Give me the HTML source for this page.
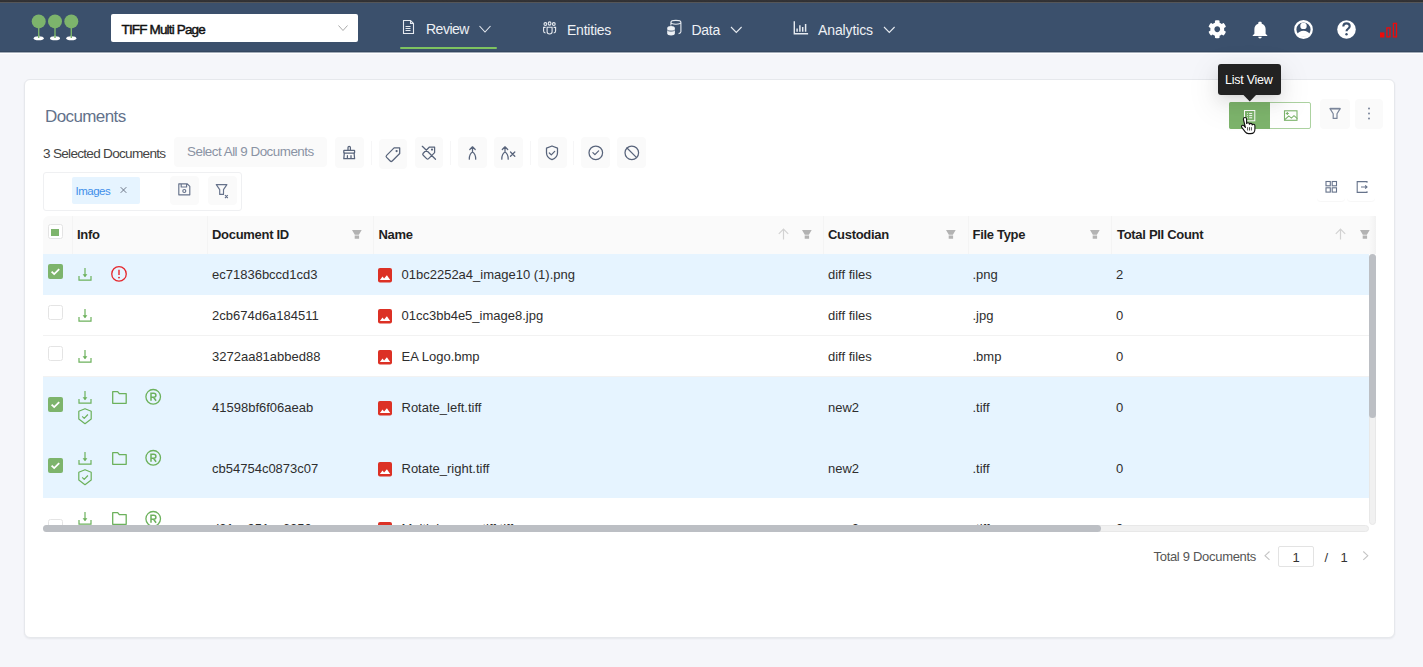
<!DOCTYPE html>
<html><head><meta charset="utf-8">
<style>
*{box-sizing:border-box;margin:0;padding:0}
html,body{width:1423px;height:667px;overflow:hidden;background:#f5f6fa;font-family:"Liberation Sans",sans-serif;color:#333}
.a{position:absolute}
svg{position:absolute;overflow:visible}
.t{white-space:nowrap;line-height:1}
#top{left:0;top:0;width:1423px;height:3px;background:linear-gradient(#343437 0,#303033 1.8px,#555658 1.8px,#555658 3px)}
#nav{left:0;top:3px;width:1423px;height:49px;background:#3b506c;border-bottom:1px solid #34475f}
#navline{left:0;top:52px;width:1423px;height:2px;background:linear-gradient(#a3acb9 0,#a3acb9 1px,#fff 1px)}
#card{left:24px;top:79px;width:1371px;height:559px;background:#fff;border:1px solid #e6e8ec;border-radius:6px;box-shadow:0 1px 2px rgba(30,40,60,.07)}
.nt{color:#eef1f5;font-size:14px}
.btn{background:#fafafa;border-radius:4px}
.hd{font-weight:700;font-size:13px;color:#1f1f1f;letter-spacing:-0.3px}
.cell{font-size:13px;color:#2e2e2e}
.row{left:43px;width:1326px}
.sel{background:#e6f4ff}
.bl{border-bottom:1px solid #f0f0f0}
.cb{width:15px;height:15px;border:1px solid #d9d9d9;border-radius:3px;background:#fff}
.cbon{width:15px;height:15px;border-radius:2px;background:#7db46c}
</style></head><body>
<div class="a" id="top"></div>
<div class="a" id="nav"></div>
<div class="a" id="navline"></div>


<svg width="0" height="0" style="position:absolute">
 <defs>
  <symbol id="dl" viewBox="0 0 14 13" overflow="visible"><g fill="none" stroke="#6cb15c" stroke-width="1.2"><path d="M7 0v8.5 M1 8v4.2h12V8"/></g><path d="M4.6 6.2h4.8L7 9.2z" fill="#6cb15c"/></symbol>
  <symbol id="sh" viewBox="0 0 14 16" overflow="visible"><path fill="none" stroke="#6cb15c" stroke-width="1.2" stroke-linejoin="round" d="M7 .7L13.2 3.2V11L7 15.7 .8 11V3.2z M4.2 8.4l2 2 3.7-3.9"/></symbol>
  <symbol id="fd" viewBox="0 0 15 13" overflow="visible"><path fill="none" stroke="#6cb15c" stroke-width="1.3" stroke-linejoin="round" d="M.7 .7h5l1.6 2h6.9v9.6H.7z"/></symbol>
  <symbol id="rc" viewBox="0 0 17 16" overflow="visible"><circle cx="8.2" cy="7.8" r="7.3" fill="none" stroke="#6cb15c" stroke-width="1.3"/><path fill="none" stroke="#6cb15c" stroke-width="1.5" d="M6 11.7V4.2h2.7c1.4 0 2.2.8 2.2 2s-.8 2-2.2 2H6 M8.5 8.2l2.6 3.5"/></symbol>
  <symbol id="wn" viewBox="0 0 16 16" overflow="visible"><circle cx="8" cy="7.9" r="7.25" fill="none" stroke="#e5262c" stroke-width="1.3"/><path d="M8 3.8v5.2" stroke="#e5262c" stroke-width="1.4"/><circle cx="8" cy="11.6" r=".95" fill="#e5262c"/></symbol>
  <symbol id="im" viewBox="0 0 14 14" overflow="visible"><rect x="0" y="0" width="14" height="14.4" rx="2" fill="#dc3125"/><path fill="#fff" d="M1.9 12L4.5 8.4 6.1 10.5 8.9 7.3 12.2 12z"/></symbol>
  <symbol id="ft" viewBox="0 0 10 9" overflow="visible"><path fill="#b3b3b3" d="M0 0h9.7L6.9 4.7H2.8z M2.7 5.4h4.4v3.4H2.7z"/></symbol>
  <symbol id="ar" viewBox="0 0 11 11" overflow="visible"><path fill="none" stroke="#d2d2d2" stroke-width="1.2" d="M5.5 1v10.5 M.8 5.8l4.7-4.8 4.7 4.8"/></symbol>
  <symbol id="ck" viewBox="0 0 15 15" overflow="visible"><rect width="15" height="15" rx="2" fill="#7db46c"/><path d="M3.6 7.6l2.6 2.5 5-5" fill="none" stroke="#fff" stroke-width="1.8"/></symbol>
  <symbol id="uc" viewBox="0 0 15 15" overflow="visible"><rect x=".5" y=".5" width="14" height="14" rx="2" fill="#fff" stroke="#e4e4e4"/></symbol>
 </defs>
</svg>

<!-- logo -->
<svg class="a" style="left:0;top:0" width="100" height="50">
  <g fill="#7db46c">
    <circle cx="38.7" cy="21.4" r="7"/><circle cx="55" cy="21.4" r="7"/><circle cx="71.3" cy="21.4" r="7"/>
    <rect x="38" y="27" width="1.4" height="11"/><rect x="54.3" y="27" width="1.4" height="11"/><rect x="70.6" y="27" width="1.4" height="11"/>
  </g>
  <g fill="#fff"><ellipse cx="38.7" cy="38.3" rx="5" ry="2"/><ellipse cx="55" cy="38.3" rx="5" ry="2"/><ellipse cx="71.3" cy="38.3" rx="5" ry="2"/></g>
  <g fill="#7db46c"><rect x="38" y="35" width="1.4" height="3"/><rect x="54.3" y="35" width="1.4" height="3"/><rect x="70.6" y="35" width="1.4" height="3"/></g>
</svg>

<!-- project select -->
<div class="a" style="left:111px;top:14px;width:247px;height:28px;background:#fff;border-radius:2px"></div>
<div class="a t" style="left:121.5px;top:23px;font-size:13.5px;font-weight:400;color:#111;-webkit-text-stroke:.45px #111;letter-spacing:-0.84px">TIFF Multi Page</div>
<svg class="a" style="left:0;top:0" width="1" height="1"><polyline points="338.5,25.5 343,30.5 347.5,25.5" fill="none" stroke="#aaa" stroke-width="1"/></svg>

<!-- nav items -->
<svg class="a" style="left:0;top:0" width="1" height="1">
  <g fill="none" stroke="#e6eaf0" stroke-width="1.1">
    <path d="M403.5 20.5h7l3 3v10h-10z M410.5 20.5v3h3"/>
    <path d="M405.5 26.5h5 M405.5 28.5h5 M405.5 30.5h5"/>
  </g>
</svg>
<div class="a t nt" style="left:426px;top:21.6px;font-size:14px;letter-spacing:-0.5px">Review</div>
<svg class="a" style="left:0;top:0" width="1" height="1"><polyline points="479.5,26 485,32 490.5,26" fill="none" stroke="#e6eaf0" stroke-width="1.1"/></svg>
<div class="a" style="left:400px;top:47px;width:97px;height:2px;background:#7ec35f;border-radius:1px"></div>

<svg class="a" style="left:0;top:0" width="1" height="1">
  <g fill="none" stroke="#e6eaf0" stroke-width="1.1">
    <circle cx="545.4" cy="24" r="1.4"/><ellipse cx="549.6" cy="23.5" rx="1.35" ry="1.65"/><circle cx="553.8" cy="24" r="1.4"/>
    <path d="M547.1 27.3h5v4.5c0 1.3-1.1 2.2-2.5 2.2s-2.5-.9-2.5-2.2z"/>
    <path d="M545.6 27.4h-2v3.6c0 1 .7 1.8 1.9 2 M553.6 27.4h2v3.6c0 1-.7 1.8-1.9 2"/>
  </g>
</svg>
<div class="a t nt" style="left:567px;top:22.6px;font-size:14px;letter-spacing:-0.22px">Entities</div>

<svg class="a" style="left:0;top:0" width="1" height="1">
  <g stroke="#e6eaf0" stroke-width="1.1">
    <path fill="none" d="M670.9 22.3c0-1.1 2.2-1.9 5-1.9s5 .8 5 1.9v9.5c0 .9-.8 1.6-2.3 1.8 M670.9 22.3c0 1.1 2.2 1.9 5 1.9s5-.8 5-1.9 M670.9 22.3v3.3"/>
    <path fill="#eef1f5" stroke="none" d="M667.2 27.9c0-1.2 1.7-2 3.85-2s3.85.8 3.85 2v5.6c0 1.2-1.7 2-3.85 2s-3.85-.8-3.85-2z"/>
    <path fill="none" stroke="#3b506c" stroke-width=".9" d="M667.2 29.9c.6.8 2 1.2 3.85 1.2s3.25-.4 3.85-1.2"/>
  </g>
</svg>
<div class="a t nt" style="left:691.5px;top:22.6px;font-size:14px;letter-spacing:-0.3px">Data</div>
<svg class="a" style="left:0;top:0" width="1" height="1"><polyline points="731,27 736.3,32.5 741.6,27" fill="none" stroke="#e6eaf0" stroke-width="1.1"/></svg>

<svg class="a" style="left:0;top:0" width="1" height="1">
  <g fill="none" stroke="#e6eaf0" stroke-width="1.2">
    <path stroke-width="1.4" d="M794.3 21.3v12.4h13.8"/>
    <path stroke-width="1.5" d="M797.1 28.4v3.3 M799.9 25.2v6.5 M802.7 26.9v4.8 M805.6 23.9v7.8"/>
  </g>
</svg>
<div class="a t nt" style="left:818px;top:22.6px;font-size:14px;letter-spacing:-0.12px">Analytics</div>
<svg class="a" style="left:0;top:0" width="1" height="1"><polyline points="884,27 889.3,32.5 894.6,27" fill="none" stroke="#e6eaf0" stroke-width="1.1"/></svg>

<!-- right nav icons -->
<svg class="a" style="left:1208px;top:20.3px" width="18.5" height="18.5" viewBox="0 0 512 512"><path fill="#fff" d="M487.4 315.7l-42.6-24.6c4.3-23.2 4.3-47 0-70.2l42.6-24.6c4.9-2.8 7.1-8.6 5.5-14-11.1-35.6-30-67.8-54.7-94.6-3.8-4.1-10-5.100-14.8-2.3L380.8 110c-17.9-15.4-38.5-27.3-60.8-35.1V25.8c0-5.6-3.9-10.5-9.4-11.7-36.7-8.2-74.3-7.8-109.2 0-5.5 1.2-9.4 6.1-9.4 11.7V75c-22.2 7.9-42.8 19.8-60.8 35.1L88.7 85.5c-4.9-2.8-11-1.9-14.8 2.3-24.7 26.7-43.6 58.9-54.7 94.6-1.7 5.4.6 11.2 5.5 14L67.3 221c-4.3 23.2-4.3 47 0 70.2l-42.6 24.6c-4.9 2.8-7.1 8.6-5.5 14 11.1 35.6 30 67.8 54.7 94.6 3.8 4.1 10 5.1 14.8 2.3l42.6-24.6c17.9 15.4 38.5 27.3 60.8 35.1v49.2c0 5.6 3.9 10.5 9.4 11.7 36.7 8.2 74.3 7.8 109.2 0 5.5-1.2 9.4-6.1 9.4-11.7v-49.2c22.2-7.9 42.8-19.8 60.8-35.1l42.6 24.6c4.9 2.8 11 1.9 14.8-2.3 24.7-26.7 43.6-58.9 54.7-94.6 1.5-5.5-.7-11.3-5.6-14.1zM256 336c-44.1 0-80-35.9-80-80s35.9-80 80-80 80 35.9 80 80-35.9 80-80 80z"/></svg>
<svg class="a" style="left:1251px;top:20px" width="18" height="19" viewBox="2 1 20 22"><path fill="#fff" d="M12 22.5c1.1 0 2-.9 2-2h-4c0 1.1.9 2 2 2zm6.5-5.5v-5.5c0-3.1-1.6-5.6-4.5-6.3V4.5c0-.9-.7-1.5-1.5-1.5h-1c-.8 0-1.5.6-1.5 1.5v.7C7.1 5.9 5.5 8.400 5.5 11.5V17l-2 2v.5h17V19z"/></svg>
<svg class="a" style="left:0;top:0" width="1" height="1">
  <circle cx="1303.5" cy="29.5" r="8.25" fill="none" stroke="#fff" stroke-width="2.3"/>
  <circle cx="1303.5" cy="25.9" r="3.2" fill="#fff"/>
  <path fill="#fff" d="M1297.2 34.2c1.2-2.1 3.5-3.4 6.3-3.4s5.1 1.3 6.3 3.4c-1.6 1.6-3.8 2.6-6.3 2.6s-4.7-1-6.3-2.6z"/>
  <circle cx="1346.5" cy="29.5" r="9.3" fill="#fff"/>
  <path fill="none" stroke="#3b506c" stroke-width="2.1" d="M1343.3 26.6c0-1.9 1.4-3.2 3.2-3.2s3.2 1.2 3.2 2.9c0 2.4-3.2 2.5-3.2 4.9"/>
  <circle cx="1346.5" cy="34.2" r="1.2" fill="#3b506c"/>
  <rect x="1380" y="32.4" width="4.4" height="5.1" fill="#ee0a0a"/>
  <rect x="1386.9" y="27.9" width="3.1" height="9" fill="none" stroke="#ee0a0a" stroke-width="1.3"/>
  <rect x="1393.4" y="23.4" width="3.1" height="13.5" fill="none" stroke="#ee0a0a" stroke-width="1.3"/>
</svg>

<!-- card -->
<div class="a" id="card"></div>
<div class="a t" style="left:45px;top:108px;font-size:17px;color:#63728b;letter-spacing:-0.6px">Documents</div>
<div class="a t" style="left:43px;top:146.5px;font-size:13.6px;color:#444;letter-spacing:-0.72px">3 Selected Documents</div>
<div class="a btn" style="left:174px;top:137px;width:153px;height:30px"></div>
<div class="a t" style="left:187px;top:145px;font-size:13.4px;color:#8a93a4;letter-spacing:-0.5px">Select All 9 Documents</div>


<!-- toolbar buttons -->
<div class="a btn" style="left:335px;top:137px;width:29px;height:31px"></div>
<div class="a" style="left:371px;top:141px;width:1px;height:24px;background:#f6f6f7"></div>
<div class="a btn" style="left:379px;top:139px;width:28px;height:30px"></div>
<div class="a btn" style="left:415px;top:137px;width:28px;height:31px"></div>
<div class="a" style="left:450px;top:141px;width:1px;height:24px;background:#f6f6f7"></div>
<div class="a btn" style="left:458px;top:137px;width:29px;height:31px"></div>
<div class="a btn" style="left:494px;top:137px;width:29px;height:31px"></div>
<div class="a" style="left:530px;top:141px;width:1px;height:24px;background:#f6f6f7"></div>
<div class="a btn" style="left:538px;top:137px;width:29px;height:31px"></div>
<div class="a" style="left:573px;top:141px;width:1px;height:24px;background:#f6f6f7"></div>
<div class="a btn" style="left:581px;top:137px;width:29px;height:31px"></div>
<div class="a btn" style="left:617px;top:137px;width:29px;height:31px"></div>
<svg class="a" style="left:0;top:0" width="1" height="1">
 <g fill="none" stroke="#58647b" stroke-width="1.25" stroke-linecap="round" stroke-linejoin="round">
  <!-- brush -->
  <path d="M348 150.2v-2.6c0-.7.5-1.2 1.2-1.2s1.2.5 1.2 1.2v2.6"/>
  <rect x="343.8" y="150.3" width="10.8" height="2.7" rx=".4"/>
  <path d="M344.3 153.1l-.5 5.6h10.8l-.5-5.6 M347.4 155.7v2.9 M351 155.7v2.9"/>
  <!-- tag -->
  <path d="M386.6 155.4l7.5-7.5h5.6v5.6l-7.5 7.5c-.6.6-1.4.6-2 0l-3.6-3.6c-.6-.6-.6-1.4 0-2z"/>
  <circle cx="396.6" cy="151" r=".5" fill="#58647b"/>
  <!-- untag -->
  <path d="M423.2 153.2l6-6h5.4v5.4l-6 6c-.6.6-1.4.6-2 0l-3.4-3.4c-.6-.6-.6-1.4 0-2z M422.3 146.3l13.2 13"/>
  <circle cx="432" cy="149.6" r=".5" fill="#58647b"/>
  <!-- merge -->
  <path d="M472.5 146.8v5.2 M469.8 149.5l2.7-2.7 2.7 2.7 M472.5 152c-2.3 1.3-3.2 3.6-3.2 7.2 M472.5 152c2.3 1.3 3.2 3.6 3.2 7.2"/>
  <!-- unmerge -->
  <path d="M505 146.8v5.2 M502.3 149.5l2.7-2.7 2.7 2.7 M505 152c-2.3 1.3-3.2 3.6-3.2 7.2 M505 152c2.3 1.3 3.2 3.6 3.2 7.2 M510.5 152l4.3 4.3 M514.8 152l-4.3 4.3"/>
  <!-- shield -->
  <path d="M552 146l5.5 2.2v4.6c0 3.4-2.3 5.8-5.5 6.9-3.2-1.1-5.5-3.5-5.5-6.9v-4.6z M549.3 153l2 1.9 3.4-3.5"/>
  <!-- check circle -->
  <circle cx="595.8" cy="152.8" r="6.8"/>
  <path d="M592.9 152.6l2 2 3.7-3.7"/>
  <!-- stop -->
  <circle cx="631.8" cy="152.8" r="6.8"/>
  <path d="M627 148l9.6 9.6"/>
 </g>
</svg>

<!-- filter box -->
<div class="a" style="left:43px;top:172px;width:199px;height:39px;border:1px solid #eff0f2;border-radius:3px"></div>
<div class="a" style="left:72px;top:177px;width:68px;height:27px;background:#e6f4ff;border-radius:2px"></div>
<div class="a t" style="left:75.5px;top:185.5px;font-size:11.5px;color:#3f8fea;letter-spacing:-0.5px">Images</div>
<svg class="a" style="left:0;top:0" width="1" height="1"><path d="M120.7 187.2l5.6 5.6 M126.3 187.2l-5.6 5.6" stroke="#6c7586" stroke-width="1" fill="none"/></svg>
<div class="a btn" style="left:170px;top:176px;width:29px;height:29px"></div>
<div class="a btn" style="left:208px;top:176px;width:29px;height:29px"></div>
<svg class="a" style="left:0;top:0" width="1" height="1">
 <g fill="none" stroke="#66728b" stroke-width="1.15" stroke-linejoin="round">
  <path d="M178.8 183.8h8.5l2.5 2.5v8.5h-11z M181.2 183.8v3.2h5.4v-3.2"/>
  <circle cx="184.3" cy="191" r="1.5"/>
  <path d="M216.3 184.6h10.6l-3.4 5v4.8h-3.8v-4.8z M225 195.2l2.8 2.8 M227.8 195.2l-2.8 2.8"/>
 </g>
</svg>

<!-- right toolbar -->
<div class="a" style="left:1229px;top:102px;width:82px;height:27px;border:1px solid #acd2a0;border-radius:2px;background:#fff"></div>
<div class="a" style="left:1229px;top:102px;width:41px;height:27px;background:#7db46c;border-radius:2px 0 0 2px"></div>
<svg class="a" style="left:0;top:0" width="1" height="1">
 <g fill="none" stroke="#fff" stroke-width="1">
  <rect x="1244.5" y="110.5" width="10.3" height="10.3"/>
  <path d="M1247.2 113.4h.8 M1249.2 113.4h3 M1247.2 115.6h.8 M1249.2 115.6h3 M1247.2 117.8h.8 M1249.2 117.8h3"/>
 </g>
 <g fill="none" stroke="#7db46c" stroke-width="1.1">
  <rect x="1284.5" y="110.8" width="12.5" height="9.5"/>
  <path d="M1285 119.5l3.8-3.6 2.6 2.2 2.6-2.4 3.4 3"/>
  <path d="M1287.3 112v3 M1285.8 113.5h3"/>
 </g>
</svg>
<div class="a btn" style="left:1320px;top:99px;width:30px;height:30px"></div>
<div class="a btn" style="left:1355px;top:99px;width:28px;height:30px"></div>
<svg class="a" style="left:0;top:0" width="1" height="1">
 <path d="M1330 108.6h10.2l-3.2 5.2v4.6h-3.8v-4.6z" fill="none" stroke="#7a859a" stroke-width="1.2" stroke-linejoin="round"/><path d="M1330 108.6h10.2" stroke="#7a859a" stroke-width="1.6"/>
 <circle cx="1369" cy="108.6" r="1" fill="#7a859a"/><circle cx="1369" cy="113.5" r="1" fill="#7a859a"/><circle cx="1369" cy="118.4" r="1" fill="#7a859a"/>
</svg>
<!-- tooltip -->
<div class="a" style="left:1218px;top:64px;width:63px;height:31px;background:#222;border-radius:3px;box-shadow:0 3px 6px -4px rgba(0,0,0,.12),0 6px 16px 0 rgba(0,0,0,.08),0 9px 28px 8px rgba(0,0,0,.05)"></div>
<svg class="a" style="left:0;top:0" width="1" height="1"><path d="M1243.5 95h12.5l-6.2 6.5z" fill="#222"/></svg>
<div class="a t" style="left:1225px;top:74px;font-size:12.5px;color:#fff;letter-spacing:-0.25px">List View</div>
<!-- cursor -->
<svg class="a" style="left:0;top:0" width="1" height="1">
 <path d="M1243.4 119.3c0-1.1.7-1.8 1.6-1.8s1.6.7 1.6 1.8v4.2c.3-.5.8-.8 1.4-.8.9 0 1.4.7 1.4 1.5.3-.5.8-.8 1.4-.8.9 0 1.4.7 1.4 1.5.3-.4.8-.6 1.3-.6.9 0 1.4.7 1.4 1.5v3.4c0 2.6-1.8 4.4-4.4 4.4h-2c-1.4 0-2.5-.6-3.3-1.7l-3.4-4.5c-.5-.7-.4-1.5.2-1.9.6-.5 1.5-.4 2 .3l1.4 1.7z" fill="#fff" stroke="#111" stroke-width="1.1" stroke-linejoin="round"/>
 <path d="M1247.6 127.2v3.3 M1249.5 127.2v3.3 M1251.4 127.2v3.3" stroke="#222" stroke-width=".8"/>
</svg>
<!-- grid / export -->
<div class="a" style="left:1317px;top:172px;width:28px;height:29px;border-radius:4px;box-shadow:0 1px 1px rgba(0,0,0,.035)"></div>
<div class="a" style="left:1347px;top:172px;width:28px;height:29px;border-radius:4px;box-shadow:0 1px 1px rgba(0,0,0,.035)"></div>
<svg class="a" style="left:0;top:0" width="1" height="1">
 <g fill="none" stroke="#66738b" stroke-width="1.1">
  <rect x="1326" y="181.5" width="4.3" height="4.3"/><rect x="1332.2" y="181.5" width="4.3" height="4.3"/>
  <rect x="1326" y="187.8" width="4.3" height="4.3"/><rect x="1332.2" y="187.8" width="4.3" height="4.3"/>
  <path d="M1367 182.8v-1.2h-9.8v10.8h9.8v-1.2 M1361 187h6 M1365.2 185.3l1.8 1.7-1.8 1.7"/>
 </g>
</svg>


<!-- table -->
<div class="a" style="left:43px;top:216px;width:1333px;height:309px;overflow:hidden;border-radius:6px 0 0 0">
<div class="a" style="left:0;top:0;width:1333px;height:38px;background:#fafafa"></div>
<div class="a" style="left:28.7px;top:0;width:1px;height:38px;background:#f4f4f4"></div>
<div class="a" style="left:163.7px;top:0;width:1px;height:38px;background:#f4f4f4"></div>
<div class="a" style="left:330.1px;top:0;width:1px;height:38px;background:#f4f4f4"></div>
<div class="a" style="left:780.4px;top:0;width:1px;height:38px;background:#f4f4f4"></div>
<div class="a" style="left:925px;top:0;width:1px;height:38px;background:#f4f4f4"></div>
<div class="a" style="left:1067.7px;top:0;width:1px;height:38px;background:#f4f4f4"></div>
<div class="a" style="left:1326px;top:0;width:7px;height:38px;background:linear-gradient(90deg,#fafafa,#f2f2f2)"></div>
<div class="a" style="left:0;top:38px;width:1326px;height:40.5px;background:#e6f4ff;"></div>
<div class="a t cell" style="left:169px;top:52px">ec71836bccd1cd3</div>
<div class="a t cell" style="left:358.5px;top:52px">01bc2252a4_image10 (1).png</div>
<div class="a t cell" style="left:785px;top:52px">diff files</div>
<div class="a t cell" style="left:929.5px;top:52px">.png</div>
<div class="a t cell" style="left:1073px;top:52px">2</div>
<svg class="a" style="left:335px;top:52px" width="14" height="14"><use href="#im"/></svg>
<svg class="a" style="left:4.6px;top:48px" width="15" height="15"><use href="#ck"/></svg>
<svg class="a" style="left:34.6px;top:52px" width="14" height="13"><use href="#dl"/></svg>
<svg class="a" style="left:68px;top:50px" width="16" height="16"><use href="#wn"/></svg>
<div class="a" style="left:0;top:78.5px;width:1326px;height:41px;background:#fff;border-bottom:1px solid #f2f2f2;"></div>
<div class="a t cell" style="left:169px;top:92.5px">2cb674d6a184511</div>
<div class="a t cell" style="left:358.5px;top:92.5px">01cc3bb4e5_image8.jpg</div>
<div class="a t cell" style="left:785px;top:92.5px">diff files</div>
<div class="a t cell" style="left:929.5px;top:92.5px">.jpg</div>
<div class="a t cell" style="left:1073px;top:92.5px">0</div>
<svg class="a" style="left:335px;top:92.5px" width="14" height="14"><use href="#im"/></svg>
<svg class="a" style="left:4.6px;top:88.5px" width="15" height="15"><use href="#uc"/></svg>
<svg class="a" style="left:34.6px;top:92.5px" width="14" height="13"><use href="#dl"/></svg>
<div class="a" style="left:0;top:119.5px;width:1326px;height:41px;background:#fff;border-bottom:1px solid #f2f2f2;"></div>
<div class="a t cell" style="left:169px;top:133.5px">3272aa81abbed88</div>
<div class="a t cell" style="left:358.5px;top:133.5px">EA Logo.bmp</div>
<div class="a t cell" style="left:785px;top:133.5px">diff files</div>
<div class="a t cell" style="left:929.5px;top:133.5px">.bmp</div>
<div class="a t cell" style="left:1073px;top:133.5px">0</div>
<svg class="a" style="left:335px;top:133.5px" width="14" height="14"><use href="#im"/></svg>
<svg class="a" style="left:4.6px;top:129.5px" width="15" height="15"><use href="#uc"/></svg>
<svg class="a" style="left:34.6px;top:133.5px" width="14" height="13"><use href="#dl"/></svg>
<div class="a" style="left:0;top:160.5px;width:1326px;height:61px;background:#e6f4ff;"></div>
<div class="a t cell" style="left:169px;top:185.1px">41598bf6f06aeab</div>
<div class="a t cell" style="left:358.5px;top:185.1px">Rotate_left.tiff</div>
<div class="a t cell" style="left:785px;top:185.1px">new2</div>
<div class="a t cell" style="left:929.5px;top:185.1px">.tiff</div>
<div class="a t cell" style="left:1073px;top:185.1px">0</div>
<svg class="a" style="left:335px;top:185.1px" width="14" height="14"><use href="#im"/></svg>
<svg class="a" style="left:4.6px;top:181.0px" width="15" height="15"><use href="#ck"/></svg>
<svg class="a" style="left:34.6px;top:174.7px" width="14" height="13"><use href="#dl"/></svg>
<svg class="a" style="left:34.6px;top:192.3px" width="14" height="16"><use href="#sh"/></svg>
<svg class="a" style="left:68.5px;top:174.7px" width="15" height="13"><use href="#fd"/></svg>
<svg class="a" style="left:101.8px;top:173.0px" width="17" height="16"><use href="#rc"/></svg>
<div class="a" style="left:0;top:221.5px;width:1326px;height:60.5px;background:#e6f4ff;"></div>
<div class="a t cell" style="left:169px;top:246.1px">cb54754c0873c07</div>
<div class="a t cell" style="left:358.5px;top:246.1px">Rotate_right.tiff</div>
<div class="a t cell" style="left:785px;top:246.1px">new2</div>
<div class="a t cell" style="left:929.5px;top:246.1px">.tiff</div>
<div class="a t cell" style="left:1073px;top:246.1px">0</div>
<svg class="a" style="left:335px;top:246.1px" width="14" height="14"><use href="#im"/></svg>
<svg class="a" style="left:4.6px;top:242.0px" width="15" height="15"><use href="#ck"/></svg>
<svg class="a" style="left:34.6px;top:235.7px" width="14" height="13"><use href="#dl"/></svg>
<svg class="a" style="left:34.6px;top:253.3px" width="14" height="16"><use href="#sh"/></svg>
<svg class="a" style="left:68.5px;top:235.7px" width="15" height="13"><use href="#fd"/></svg>
<svg class="a" style="left:101.8px;top:234.0px" width="17" height="16"><use href="#rc"/></svg>
<div class="a" style="left:0;top:282px;width:1326px;height:60px;background:#fff;border-bottom:1px solid #f2f2f2;"></div>
<div class="a t cell" style="left:169px;top:305.9px">d31ac951ce6250a</div>
<div class="a t cell" style="left:358.5px;top:305.9px">Multiple page tiff.tiff</div>
<div class="a t cell" style="left:785px;top:305.9px">new2</div>
<div class="a t cell" style="left:929.5px;top:305.9px">.tiff</div>
<div class="a t cell" style="left:1073px;top:305.9px">0</div>
<svg class="a" style="left:335px;top:306.3px" width="14" height="14"><use href="#im"/></svg>
<svg class="a" style="left:4.6px;top:302.5px" width="15" height="15"><use href="#uc"/></svg>
<svg class="a" style="left:34.6px;top:296.2px" width="14" height="13"><use href="#dl"/></svg>
<svg class="a" style="left:34.6px;top:313.8px" width="14" height="16"><use href="#sh"/></svg>
<svg class="a" style="left:68.5px;top:296.2px" width="15" height="13"><use href="#fd"/></svg>
<svg class="a" style="left:101.8px;top:294.5px" width="17" height="16"><use href="#rc"/></svg>
<svg class="a" style="left:4.5px;top:8px" width="15" height="15"><use href="#uc"/></svg>
<div class="a" style="left:8px;top:12.5px;width:8px;height:7px;background:#7db46c"></div>
<div class="a t hd" style="left:34px;top:12px">Info</div>
<div class="a t hd" style="left:169px;top:12px">Document ID</div>
<div class="a t hd" style="left:335.5px;top:12px">Name</div>
<div class="a t hd" style="left:785px;top:12px">Custodian</div>
<div class="a t hd" style="left:929.5px;top:12px">File Type</div>
<div class="a t hd" style="left:1074px;top:12px">Total PII Count</div>
<svg class="a" style="left:309.3px;top:14.2px" width="10" height="9"><use href="#ft"/></svg>
<svg class="a" style="left:758.7px;top:14.2px" width="10" height="9"><use href="#ft"/></svg>
<svg class="a" style="left:902.5px;top:14.2px" width="10" height="9"><use href="#ft"/></svg>
<svg class="a" style="left:1046.9px;top:14.2px" width="10" height="9"><use href="#ft"/></svg>
<svg class="a" style="left:1316.9px;top:14.2px" width="10" height="9"><use href="#ft"/></svg>
<svg class="a" style="left:734.8px;top:12.2px" width="11" height="11"><use href="#ar"/></svg>
<svg class="a" style="left:1292.3px;top:12.2px" width="11" height="11"><use href="#ar"/></svg>
</div>

<div class="a" style="left:1369px;top:254px;width:7px;height:271px;background:#f1f1f1;border-radius:4px;border:1px solid #e8e8e8"></div>
<div class="a" style="left:1369px;top:254px;width:7px;height:164px;background:#bcbfc4;border-radius:4px"></div>
<div class="a" style="left:43px;top:525px;width:1326px;height:7px;background:#f1f1f1;border-radius:4px;border:1px solid #e8e8e8"></div>
<div class="a" style="left:43px;top:525px;width:1058px;height:7px;background:#bcbfc4;border-radius:4px"></div>
<!-- pagination -->
<div class="a t" style="left:1153.5px;top:549.5px;font-size:13px;color:#555;letter-spacing:-0.3px">Total 9 Documents</div>
<svg class="a" style="left:0;top:0" width="1" height="1"><path d="M1269.5 551.5l-4.5 4.2 4.5 4.2 M1363.3 551.5l4.5 4.2-4.5 4.2" fill="none" stroke="#c4c4c4" stroke-width="1.1"/></svg>
<div class="a" style="left:1278px;top:545.5px;width:36px;height:21px;border:1px solid #e3e3e3;border-radius:2px;background:#fff"></div>
<div class="a t" style="left:1292.5px;top:550.5px;font-size:13px;color:#333">1</div>
<div class="a t" style="left:1324.5px;top:550.5px;font-size:13px;color:#333">/</div>
<div class="a t" style="left:1340.5px;top:550.5px;font-size:13px;color:#333">1</div>

</body></html>
